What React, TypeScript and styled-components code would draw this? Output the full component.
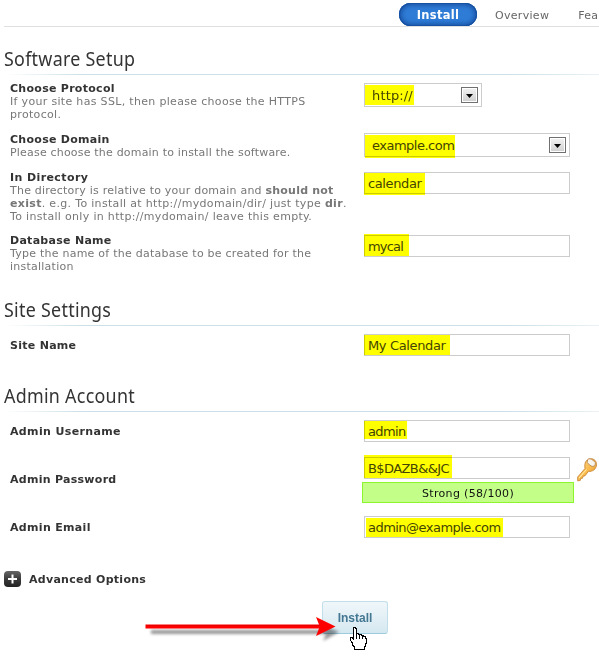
import React from "react";
import styled, { createGlobalStyle } from "styled-components";

const GlobalStyle = createGlobalStyle`
  * { box-sizing: border-box; }
  body { margin: 0; background: #fff; overflow: hidden; }
`;

const Page = styled.main`
  width: 599px;
  height: 661px;
  overflow: hidden;
  display: flex;
  flex-direction: column;
  font-family: "DejaVu Sans", Verdana, sans-serif;
  font-size: 11px;
  line-height: 13px;
  color: #333;
  white-space: nowrap;
`;

const Tabs = styled.nav`
  flex: none;
  height: 27px;
  display: flex;
  align-items: flex-start;
  margin-left: 4px;
  padding: 3px 0 0 395px;
  border-bottom: 1px solid #e0e0e0;
`;

const Tab = styled.a<{ $gap: number }>`
  margin: 6px 0 0 ${(p) => p.$gap}px;
  letter-spacing: 0.3px;
  color: #666;
`;

const ActiveTab = styled.a`
  flex: none;
  width: 78px;
  height: 23px;
  border-radius: 12px;
  background: #2f7cd6;
  box-shadow: inset 0 0 5px 2px #164f9f, inset 0 0 0 1px #1a56a8;
  color: #fff;
  font-weight: bold;
  font-size: 11.5px;
  letter-spacing: 0.3px;
  line-height: 24px;
  text-align: center;
`;

const Section = styled.section<{ $height: number }>`
  flex: none;
  height: ${(p) => p.$height}px;
  display: flex;
  flex-direction: column;
`;

const Heading = styled.h2<{ $top: number }>`
  flex: none;
  margin: 0 0 0 4px;
  height: ${(p) => p.$top + 27}px;
  padding: ${(p) => p.$top}px 0 0;
  font: 400 19px/24px "Noto Sans", sans-serif;
  letter-spacing: 0.3px;
  color: #333;
  transform: scaleX(0.94);
  transform-origin: left;
`;

const Divider = styled.div`
  flex: none;
  height: 1px;
  margin-left: 4px;
  background: linear-gradient(to right, #fff, #cbdfe7 80px, #cbdfe7 500px, #eaf2f5);
`;

const Row = styled.div<{ $height: number }>`
  flex: none;
  height: ${(p) => p.$height}px;
  display: grid;
  grid-template-columns: 352px 1fr;
  padding-left: 10px;
`;

const Caption = styled.div<{ $top: number }>`
  padding-top: ${(p) => p.$top}px;
`;

const Label = styled.div<{ $spacing?: number }>`
  font-weight: bold;
  color: #333;
  letter-spacing: ${(p) => p.$spacing ?? 0.28}px;
`;

const Help = styled.div<{ $spacing?: number }>`
  color: #777;
  letter-spacing: ${(p) => p.$spacing ?? 0.32}px;
`;

const Controls = styled.div<{ $top: number }>`
  padding: ${(p) => p.$top}px 0 0 2px;
`;

const Field = styled.div<{ $width?: number; $height?: number; $indent?: number }>`
  position: relative;
  width: ${(p) => p.$width ?? 206}px;
  height: ${(p) => p.$height ?? 22}px;
  display: flex;
  align-items: center;
  justify-content: space-between;
  padding: 0 3px 0 ${(p) => p.$indent ?? 3}px;
  border: 1px solid #ccc;
  background: #fff;
  font-size: 13px;
  line-height: 16px;
  color: #444;
`;

const Value = styled.span<{ $spacing?: number }>`
  padding-top: 2px;
  letter-spacing: ${(p) => p.$spacing ?? 0}px;
`;

const Marker = styled.span<{ $x: number; $y: number; $w: number; $h: number }>`
  position: absolute;
  left: ${(p) => p.$x - 1}px;
  top: ${(p) => p.$y - 1}px;
  width: ${(p) => p.$w}px;
  height: ${(p) => p.$h}px;
  background: #ff0;
  mix-blend-mode: multiply;
`;

const Dropdown = styled.span`
  width: 17px;
  height: 16px;
  display: flex;
  align-items: center;
  justify-content: center;
  padding-top: 2px;
  border: 1px solid #707070;
  box-shadow: inset 0 0 0 1px #fff;
  background: linear-gradient(#f2f2f2, #cfcfcf);
`;

const PasswordLine = styled.div`
  display: flex;
  height: 25px;
`;

const KeyIcon = styled.svg`
  margin-left: 7px;
  overflow: visible;
`;

const Strength = styled.div`
  width: 212px;
  height: 21px;
  margin-left: -2px;
  border: 1px solid #8df52e;
  background: #c3ff88;
  color: #111;
  line-height: 21px;
  letter-spacing: 0.34px;
  text-align: center;
`;

const Advanced = styled.div`
  flex: none;
  height: 16px;
  display: flex;
  align-items: center;
  padding-left: 4px;
  gap: 8px;
`;

const Actions = styled.div`
  flex: none;
  height: 74px;
  padding: 14px 0 0 322px;
  position: relative;
`;

const InstallButton = styled.button`
  width: 66px;
  height: 33px;
  padding: 0;
  border: 1px solid #c1dfea;
  border-bottom-color: #9ccbdc;
  border-radius: 3px;
  background: linear-gradient(#f0f7fa, #d5e8f0);
  color: #437792;
  font: bold 12px "Liberation Sans", sans-serif;
`;

const Pointer = styled.svg`
  position: absolute;
  left: 140px;
  top: 14px;
  overflow: visible;
`;

const Caret = () => (
  <Dropdown>
    <svg width="7" height="4" viewBox="0 0 7 4">
      <path d="M0 0h7L3.5 4z" fill="#000" />
    </svg>
  </Dropdown>
);

export default function App() {
  return (
    <>
      <GlobalStyle />
      <Page>
        <Tabs>
          <ActiveTab>Install</ActiveTab>
          <Tab $gap={18}>Overview</Tab>
          <Tab $gap={29}>Fea</Tab>
        </Tabs>

        <Section $height={262}>
          <Heading $top={20}>Software Setup</Heading>
          <Divider />
          <Row $height={51}>
            <Caption $top={7}>
              <Label>Choose Protocol</Label>
              <Help>If your site has SSL, then please choose the HTTPS</Help>
              <Help>protocol.</Help>
            </Caption>
            <Controls $top={8}>
              <Field $width={118} $height={24} $indent={7}>
                <Value $spacing={0.15}>http://</Value>
                <Caret />
                <Marker $x={1} $y={2} $w={49} $h={20} />
              </Field>
            </Controls>
          </Row>
          <Row $height={38}>
            <Caption $top={7}>
              <Label>Choose Domain</Label>
              <Help $spacing={0.19}>Please choose the domain to install the software.</Help>
            </Caption>
            <Controls $top={7}>
              <Field $height={24} $indent={7}>
                <Value $spacing={-0.5}>example.com</Value>
                <Caret />
                <Marker $x={1} $y={2} $w={90} $h={23} />
              </Field>
            </Controls>
          </Row>
          <Row $height={63}>
            <Caption $top={7}>
              <Label $spacing={0.4}>In Directory</Label>
              <Help $spacing={0.22}>The directory is relative to your domain and <b>should not</b></Help>
              <Help>
                <b>exist</b>. e.g. To install at http://mydomain/dir/ just type <b>dir</b>.
              </Help>
              <Help>To install only in http://mydomain/ leave this empty.</Help>
            </Caption>
            <Controls $top={8}>
              <Field>
                <Value $spacing={-0.38}>calendar</Value>
                <Marker $x={0} $y={1} $w={61} $h={22} />
              </Field>
            </Controls>
          </Row>
          <Row $height={62}>
            <Caption $top={7}>
              <Label>Database Name</Label>
              <Help $spacing={0.24}>Type the name of the database to be created for the</Help>
              <Help $spacing={0.24}>installation</Help>
            </Caption>
            <Controls $top={8}>
              <Field>
                <Value $spacing={-0.8}>mycal</Value>
                <Marker $x={0} $y={-1} $w={45} $h={22} />
              </Field>
            </Controls>
          </Row>
        </Section>

        <Section $height={86}>
          <Heading $top={9}>Site Settings</Heading>
          <Divider />
          <Row $height={49}>
            <Caption $top={13}>
              <Label>Site Name</Label>
            </Caption>
            <Controls $top={8}>
              <Field>
                <Value $spacing={-0.36}>My Calendar</Value>
                <Marker $x={0} $y={1} $w={86} $h={20} />
              </Field>
            </Controls>
          </Row>
        </Section>

        <Section $height={196}>
          <Heading $top={9}>Admin Account</Heading>
          <Divider />
          <Row $height={37}>
            <Caption $top={13}>
              <Label $spacing={0.36}>Admin Username</Label>
            </Caption>
            <Controls $top={8}>
              <Field>
                <Value $spacing={-0.6}>admin</Value>
                <Marker $x={0} $y={1} $w={43} $h={18} />
              </Field>
            </Controls>
          </Row>
          <Row $height={59}>
            <Caption $top={24}>
              <Label>Admin Password</Label>
            </Caption>
            <Controls $top={8}>
              <PasswordLine>
                <Field>
                  <Value $spacing={-0.58}>B$DAZB&amp;&amp;JC</Value>
                  <Marker $x={0} $y={-2} $w={88} $h={23} />
                </Field>
                <KeyIcon width="20" height="24" viewBox="0 0 20 24">
                  <defs>
                    <linearGradient id="gold" x1="0" y1="0" x2="1" y2="1">
                      <stop offset="0" stopColor="#ffe08a" />
                      <stop offset=".55" stopColor="#f9b84a" />
                      <stop offset="1" stopColor="#d9862b" />
                    </linearGradient>
                  </defs>
                  <path
                    d="M8 11.500 .7 20v3.800l2.500-.3.5-2 1.800-.3.5-2 2-.4 3.500-4.500c4 .6 7.800-2.200 8-6.500C19.700 4 17 1.500 13.500 1.800 9.500 2 7 5.500 8 11.500z"
                    fill="url(#gold)" stroke="#c98435" strokeWidth=".9"
                  />
                  <ellipse cx="14.300" cy="5.600" rx="4.600" ry="3" transform="rotate(35 14.300 5.600)" fill="#f7f4ee" stroke="#bd8c50" strokeWidth=".9" />
                  <path d="M9.500 12.500 2 21" stroke="#fff0b0" strokeWidth="1" />
                </KeyIcon>
              </PasswordLine>
              <Strength>Strong (58/100)</Strength>
            </Controls>
          </Row>
          <Row $height={60}>
            <Caption $top={13}>
              <Label $spacing={0.32}>Admin Email</Label>
            </Caption>
            <Controls $top={8}>
              <Field>
                <Value $spacing={-0.53}>admin@example.com</Value>
                <Marker $x={2} $y={2} $w={137} $h={19} />
              </Field>
            </Controls>
          </Row>
        </Section>

        <Advanced>
          <svg width="17" height="16" viewBox="0 0 17 16">
            <defs>
              <linearGradient id="dark" x1="0" y1="0" x2="0" y2="1">
                <stop offset="0" stopColor="#666" />
                <stop offset=".5" stopColor="#3b3b3b" />
                <stop offset="1" stopColor="#222" />
              </linearGradient>
            </defs>
            <rect width="17" height="16" rx="4" fill="url(#dark)" />
            <path d="M8.500 3.500v9M4 8h9" stroke="#fff" strokeWidth="2" />
          </svg>
          <Label>Advanced Options</Label>
        </Advanced>
        <Actions>
          <InstallButton>Install</InstallButton>
          <Pointer width="240" height="60" viewBox="140 601 240 60">
            <defs>
              <filter id="soft" x="-10%" y="-100%" width="120%" height="300%">
                <feGaussianBlur stdDeviation="1.500" />
              </filter>
            </defs>
            <path d="M151 630h172l-3-6 19 8-16 9 3-7H151z" fill="#000" opacity=".4" filter="url(#soft)" />
            <path d="M145.500 624.500H319L316 617l19.500 9.500L316 636l3-7.500H145.500z" fill="#f00" />
            <path d="M146 625.500H320" stroke="#b80000" strokeWidth="1" opacity=".35" />
            <path
              d="M353.500 627.500h2v1h1v5h2v1h3v1h2v1h1.500v2h1v5h-1v3h-1v3h-10v-3l-2-2v-2l-2-3v-2h2l1.500 1.500z"
              fill="#fff" stroke="#000" strokeWidth="1" shapeRendering="crispEdges"
            />
            <path d="M356.500 634v5M359.500 635v4M362.500 636v3" stroke="#000" strokeWidth="1" shapeRendering="crispEdges" />
          </Pointer>
        </Actions>
      </Page>
    </>
  );
}
